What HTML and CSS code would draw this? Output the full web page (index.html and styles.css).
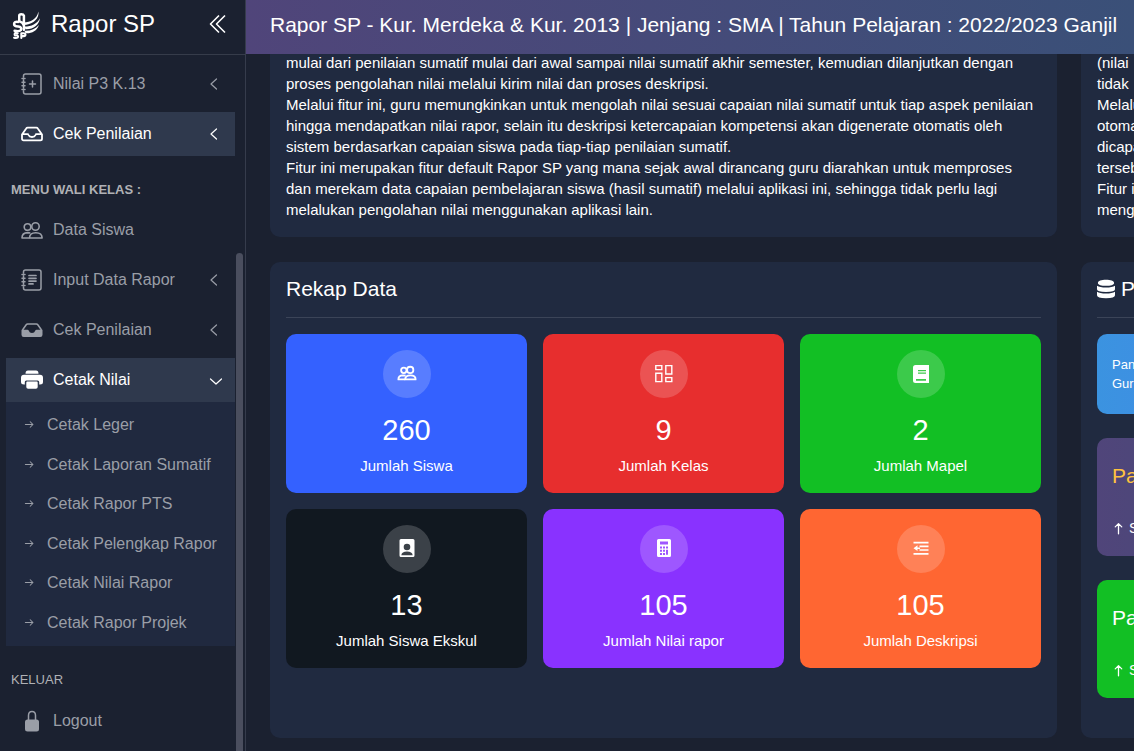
FILE: index.html
```html
<!DOCTYPE html>
<html lang="id">
<head>
<meta charset="utf-8">
<meta name="viewport" content="width=device-width, initial-scale=1">
<title>Rapor SP</title>
<link rel="stylesheet" href="styles.css">
</head>
<body>
<svg class="sprite" aria-hidden="true">
  <symbol id="i-left" viewBox="0 0 16 16"><path d="M10.500 3 5 8l5.500 5" fill="none" stroke="currentColor" stroke-width="1.200" stroke-linecap="round" stroke-linejoin="round"/></symbol>
  <symbol id="i-down" viewBox="0 0 16 16"><path d="M4.500 7 10 12l5.500-5" fill="none" stroke="currentColor" stroke-width="1.200" stroke-linecap="round" stroke-linejoin="round"/></symbol>
  <symbol id="i-arrow" viewBox="0 0 16 16"><path d="M2 8h11M9 4l4 4-4 4" fill="none" stroke="currentColor" stroke-width="1.500" stroke-linecap="round" stroke-linejoin="round"/></symbol>
  <symbol id="i-up" viewBox="0 0 16 16"><path d="M8 14.500V2M4 6l4-4 4 4" fill="none" stroke="currentColor" stroke-width="1.600" stroke-linecap="round" stroke-linejoin="round"/></symbol>
  <symbol id="i-people" viewBox="0 0 22 22"><g fill="none" stroke="currentColor" stroke-width="1.600" stroke-linejoin="round"><circle cx="6.500" cy="8" r="3.300"/><circle cx="14.500" cy="7.500" r="3.700"/><path d="M8.500 19c0-3.600 2.500-5.200 6.300-5.200s6.300 1.600 6.300 5.200z"/><path d="M8.500 19H1c0-3.600 2-5.400 5.800-5.400l2.500.4"/></g></symbol>
  <symbol id="i-people-bold" viewBox="0 0 22 22"><g fill="none" stroke="currentColor" stroke-width="2" stroke-linejoin="round"><circle cx="7.500" cy="7" r="3"/><circle cx="14.500" cy="6.500" r="3.500"/><path d="M9 17c0-3.300 2.500-4.500 5.800-4.500S20.500 13.700 20.500 17z"/><path d="M9 17H1.500c0-3.300 1.500-4.500 5-4.500l3 .3"/></g></symbol>
  <symbol id="i-book-plus" viewBox="0 0 22 22"><g fill="none" stroke="currentColor" stroke-width="1.500" stroke-linecap="round"><path d="M2.500 4V3q0-2 2-2H18q2 0 2 2v16q0 2-2 2H4.500q-2 0-2-2v-1M2.500 7v1M2.500 10.500v1M2.500 14v1M1 5.500h3M1 9.200h3M1 12.800h3M1 16.500h3M11.500 8v6M8.500 11h6"/></g></symbol>
  <symbol id="i-book-text" viewBox="0 0 22 22"><g fill="none" stroke="currentColor" stroke-width="1.500" stroke-linecap="round"><path d="M2.500 4V3q0-2 2-2H18q2 0 2 2v16q0 2-2 2H4.500q-2 0-2-2v-1M2.500 7v1M2.500 10.500v1M2.500 14v1M1 5.500h3M1 9.200h3M1 12.800h3M1 16.500h3"/><path d="M8 6.500h7M8 9.300h7M8 12.100h7M8 14.900h4" stroke-width="1.700"/></g></symbol>
  <symbol id="i-inbox" viewBox="0 0 22 22"><path d="M1 11.500 5.200 5.500q.5-.8 1.400-.8h8.800q.9 0 1.400.8L21 11.500v4.200q0 1.600-1.600 1.600H2.600Q1 17.300 1 15.700zM1 11.200h5.500q.8 0 1 .8.800 2 3.500 2t3.500-2q.2-.8 1-.8H21" fill="none" stroke="currentColor" stroke-width="1.800" stroke-linejoin="round"/></symbol>
  <symbol id="i-inbox-fill" viewBox="0 0 22 22"><path d="M1.500 11 5.200 5.700q.5-.7 1.400-.7h8.800q.9 0 1.400.7L20.500 11" fill="none" stroke="currentColor" stroke-width="1.500"/><path d="M.5 10.800h6q1 0 1.300 1Q8.500 14 11 14t3.200-2.200q.3-1 1.300-1h6v5q0 2.200-2.200 2.200H2.700Q.5 18 .5 15.800z" fill="currentColor"/></symbol>
  <symbol id="i-printer" viewBox="0 0 22 22"><path d="M7 1.500h8q2.500 0 2.500 3.200h-13Q4.500 1.500 7 1.500zM3 5.700h16q3 0 3 3V13q0 2.500-3 2.500h-.8V13q0-1.500-1.500-1.500H5.300q-1.500 0-1.500 1.500v2.500H3Q0 15.500 0 13V8.700q0-3 3-3zM6.300 12.600h9.400q1 0 1 1v4.400q0 1.800-1.800 1.800H7.100q-1.800 0-1.800-1.800v-4.400q0-1 1-1z" fill="currentColor"/></symbol>
  <symbol id="i-lock" viewBox="0 0 22 22"><path d="M7.500 10V5.500q0-4 3.500-4t3.500 4V10" fill="none" stroke="currentColor" stroke-width="1.500"/><rect x="4" y="9.500" width="14" height="12" rx="2.500" fill="currentColor"/></symbol>
  <symbol id="i-grid" viewBox="0 0 20 20"><path d="M1.800 1.600h6v4h-6zM11.800 1.600h6v8.400h-6zM1.800 9.200h6v8.400h-6zM11.800 13.600h6v4h-6z" fill="none" stroke="currentColor" stroke-width="1.400"/></symbol>
  <symbol id="i-book" viewBox="0 0 20 20"><path fill-rule="evenodd" d="M4.500 1H18v18H4.500Q2 19 2 16.500v-13Q2 1 4.500 1zM7 6v1.200h8V6zM7 8.500v1.200h8V8.500zM5 15v1.700h10V15z" fill="currentColor"/></symbol>
  <symbol id="i-badge" viewBox="0 0 20 20"><path fill-rule="evenodd" d="M4 0h12q1.500 0 1.500 1.500v15Q17.500 18 16 18H4q-1.500 0-1.500-1.500v-15Q2.500 0 4 0zM10 4.700a3.300 3.300 0 1 0 0 6.600 3.300 3.300 0 1 0 0-6.600zM4.300 16.200h11.400q-.5-3.600-5.700-3.600t-5.700 3.600z" fill="currentColor"/></symbol>
  <symbol id="i-calc" viewBox="0 0 20 20"><path fill-rule="evenodd" d="M4.500 0h11Q17 0 17 1.500v15q0 1.500-1.500 1.500h-11Q3 18 3 16.500v-15Q3 0 4.500 0zM6 2.500v3h8v-3zM6 7.500v2h2v-2zM9 7.500v2h2v-2zM12 7.500v2h2v-2zM6 10.800v2h2v-2zM9 10.800v2h2v-2zM12 10.800v5h2v-5zM6 14v2h2v-2zM9 14v2h2v-2z" fill="currentColor"/></symbol>
  <symbol id="i-indent" viewBox="0 0 20 20"><path d="M2.500 3.600h15M8.500 7.300h9M8.500 11h9M2.500 14.800h15" stroke="currentColor" stroke-width="1.700"/><path d="M2.500 9.200 6.500 6.300V12zM6 8.500h3V10H6z" fill="currentColor"/></symbol>
  <symbol id="i-db" viewBox="0 0 20 22"><path d="M1 4.200C1 2.200 5 .8 10 .8s9 1.400 9 3.400-4 3.300-9 3.300-9-1.300-9-3.300zM0 7.300q3 2 10 2t10-2v3.900q0 3-10 3t-10-3zM0 14q3 2 10 2t10-2v4q0 3.300-10 3.300T0 18z" fill="currentColor"/></symbol>
</svg>

<div class="app">
  <aside class="sidebar">
    <header class="brand">
      <svg class="brand-logo" viewBox="0 0 28 28" aria-hidden="true">
        <g fill="#fff">
          <path d="M11 12c7 0 13-3 14.500-10.500C26.500 8 21 13.500 13 14.500z"/>
          <path d="M12 16c7 0 12-2.500 15-8-1 7-7 11-14 10.500z"/>
          <path d="M12 20c6 .3 10.500-1.500 14-5.500-2 6-7.500 8.500-13 8z"/>
        </g>
        <g fill="none" stroke="#fff" stroke-linecap="round" stroke-linejoin="round">
          <path d="M7 11V5.500q0-1.500 2-1.500t2.500 1.500V19M6 11.500q-4-.5-4 2T6 16q4 .5 2.500 3.500Q7 21 2.500 20M7.500 11q3 1 4 4" stroke-width="2.400"/>
          <path d="M5.500 22.500q-3-.8-3 .8t2 1.200q2 .5 1 2-1 .8-3.500.3M9 27v-4.500h2q2 0 2 1.500t-2 1.200H9" stroke-width="2"/>
        </g>
      </svg>
      <span class="brand-name">Rapor SP</span>
      <button class="collapse" type="button" aria-label="Tutup menu">
        <svg viewBox="0 0 20 20" aria-hidden="true"><path d="M11 1.500 2.500 10l8.500 8.500M17 1.500 8.500 10l8.500 8.500" fill="none" stroke="currentColor" stroke-width="1.600" stroke-linejoin="round"/></svg>
      </button>
    </header>
    <nav class="menu">
      <a class="item" href="#"><svg class="icon"><use href="#i-book-plus"/></svg><span>Nilai P3 K.13</span><svg class="chev"><use href="#i-left"/></svg></a>
      <a class="item active" href="#"><svg class="icon"><use href="#i-inbox"/></svg><span>Cek Penilaian</span><svg class="chev"><use href="#i-left"/></svg></a>
      <h2 class="group strong">MENU WALI KELAS :</h2>
      <a class="item" href="#"><svg class="icon"><use href="#i-people"/></svg><span>Data Siswa</span></a>
      <a class="item" href="#"><svg class="icon"><use href="#i-book-text"/></svg><span>Input Data Rapor</span><svg class="chev"><use href="#i-left"/></svg></a>
      <a class="item" href="#"><svg class="icon"><use href="#i-inbox-fill"/></svg><span>Cek Penilaian</span><svg class="chev"><use href="#i-left"/></svg></a>
      <div class="open">
        <a class="item active" href="#"><svg class="icon"><use href="#i-printer"/></svg><span>Cetak Nilai</span><svg class="chev"><use href="#i-down"/></svg></a>
        <ul class="submenu">
          <li><a href="#"><svg><use href="#i-arrow"/></svg>Cetak Leger</a></li>
          <li><a href="#"><svg><use href="#i-arrow"/></svg>Cetak Laporan Sumatif</a></li>
          <li><a href="#"><svg><use href="#i-arrow"/></svg>Cetak Rapor PTS</a></li>
          <li><a href="#"><svg><use href="#i-arrow"/></svg>Cetak Pelengkap Rapor</a></li>
          <li><a href="#"><svg><use href="#i-arrow"/></svg>Cetak Nilai Rapor</a></li>
          <li><a href="#"><svg><use href="#i-arrow"/></svg>Cetak Rapor Projek</a></li>
        </ul>
      </div>
      <h2 class="group">KELUAR</h2>
      <a class="item" href="#"><svg class="icon"><use href="#i-lock"/></svg><span>Logout</span></a>
    </nav>
    <div class="scroll-thumb"></div>
  </aside>

  <div class="page">
    <header class="topbar"><h1>Rapor SP - Kur. Merdeka &amp; Kur. 2013 | Jenjang : SMA | Tahun Pelajaran : 2022/2023 Ganjil</h1></header>
    <main class="content">
      <section class="panel intro">
        <p>mulai dari penilaian sumatif mulai dari awal sampai nilai sumatif akhir semester, kemudian dilanjutkan dengan<br>proses pengolahan nilai melalui kirim nilai dan proses deskripsi.</p>
        <p>Melalui fitur ini, guru memungkinkan untuk mengolah nilai sesuai capaian nilai sumatif untuk tiap aspek penilaian<br>hingga mendapatkan nilai rapor, selain itu deskripsi ketercapaian kompetensi akan digenerate otomatis oleh<br>sistem berdasarkan capaian siswa pada tiap-tiap penilaian sumatif.</p>
        <p>Fitur ini merupakan fitur default Rapor SP yang mana sejak awal dirancang guru diarahkan untuk memproses<br>dan merekam data capaian pembelajaran siswa (hasil sumatif) melalui aplikasi ini, sehingga tidak perlu lagi<br>melalukan pengolahan nilai menggunakan aplikasi lain.</p>
      </section>
      <section class="panel intro">
        <p>(nilai<br>tidak</p>
        <p>Melalui<br>otomatis<br>dicapai<br>tersebut</p>
        <p>Fitur ini<br>mengolah</p>
      </section>
      <section class="panel">
        <h2 class="panel-title">Rekap Data</h2>
        <div class="stats">
          <article class="stat blue"><div class="bubble"><svg><use href="#i-people-bold"/></svg></div><strong>260</strong><span>Jumlah Siswa</span></article>
          <article class="stat red"><div class="bubble"><svg><use href="#i-grid"/></svg></div><strong>9</strong><span>Jumlah Kelas</span></article>
          <article class="stat green"><div class="bubble"><svg><use href="#i-book"/></svg></div><strong>2</strong><span>Jumlah Mapel</span></article>
          <article class="stat black"><div class="bubble"><svg><use href="#i-badge"/></svg></div><strong>13</strong><span>Jumlah Siswa Ekskul</span></article>
          <article class="stat purple"><div class="bubble"><svg><use href="#i-calc"/></svg></div><strong>105</strong><span>Jumlah Nilai rapor</span></article>
          <article class="stat orange"><div class="bubble"><svg><use href="#i-indent"/></svg></div><strong>105</strong><span>Jumlah Deskripsi</span></article>
        </div>
      </section>
      <section class="panel">
        <h2 class="panel-title"><svg><use href="#i-db"/></svg>Panduan</h2>
        <div class="guides">
          <article class="guide sky"><p>Panduan<br>Guru</p></article>
          <article class="guide violet"><h3>Panduan</h3><a href="#"><svg><use href="#i-up"/></svg>Selengkapnya</a></article>
          <article class="guide lime"><h3>Panduan</h3><a href="#"><svg><use href="#i-up"/></svg>Selengkapnya</a></article>
        </div>
      </section>
    </main>
  </div>
</div>
</body>
</html>
```

FILE: styles.css
```css
* { box-sizing: border-box; }
body {
  margin: 0;
  background: #1b2130;
  color: #fff;
  font: 15px/21px "Liberation Sans", Arial, sans-serif;
}
h1, h2, h3, p, ul { margin: 0; padding: 0; font-weight: 400; }
a { color: inherit; text-decoration: none; }
.sprite { display: none; }
.app { display: flex; height: 100vh; overflow: hidden; }

/* Sidebar */
.sidebar {
  position: relative;
  flex: 0 0 246px;
  overflow: hidden;
  border-right: 1px solid #363c4c;
  background: #1b2130;
}
.brand {
  display: flex;
  align-items: center;
  height: 55px;
  padding: 0 17px 6px 12px;
  border-bottom: 1px solid #363c4a;
}
.brand-logo { width: 29px; height: 29px; }
.brand-name { margin-left: 10px; font-size: 24px; line-height: 30px; }
.collapse {
  display: flex;
  margin-left: auto;
  padding: 0;
  border: 0;
  background: none;
  color: #fff;
}
.collapse svg { width: 20px; height: 20px; }
.menu { display: flex; flex-direction: column; gap: 6px; padding: 7px 10px 0 6px; }
.item {
  display: flex;
  align-items: center;
  height: 44px;
  padding: 0 13px 0 15px;
  color: #9a9ea7;
  font-size: 16px;
  line-height: 20px;
}
.item.active { background: #2f394d; color: #fff; }
.icon { width: 22px; height: 22px; margin-right: 10px; }
.chev { width: 16px; height: 16px; margin-left: auto; }
.group {
  padding: 19px 5px 5px;
  color: #b0b1b5;
  font-size: 13px;
  line-height: 17px;
}
.strong { padding-bottom: 4px; font-weight: 700; }
.submenu {
  display: flex;
  flex-direction: column;
  min-height: 244px;
  padding: 3px 0 4px;
  background: #20293f;
  list-style: none;
}
.submenu li { display: flex; flex: 1; }
.submenu a {
  display: flex;
  flex: 1;
  align-items: center;
  padding-left: 18px;
  color: #9a9ea7;
  font-size: 16px;
}
.submenu svg { width: 11px; height: 11px; margin-right: 12px; }
.scroll-thumb {
  position: absolute;
  top: 253px;
  right: 2px;
  bottom: -8px;
  width: 7px;
  border-radius: 4px;
  background: #4a4e5e;
}

/* Main area */
.page { display: flex; flex: 1; flex-direction: column; min-width: 0; }
.topbar {
  display: flex;
  flex: none;
  align-items: center;
  height: 54px;
  padding: 0 0 4px 24px;
  background: linear-gradient(90deg, #50457a, #3a5078);
}
.topbar h1 { font-size: 21px; line-height: 26px; white-space: nowrap; }
.content {
  display: grid;
  flex: 1;
  grid-template-columns: calc(100% - 77px) 380px;
  grid-template-rows: auto 1fr;
  gap: 25px 24px;
  min-height: 0;
  padding: 0 0 13px 24px;
  overflow: hidden;
}
.panel { min-width: 0; padding: 15px 16px; border-radius: 10px; background: #202a40; }
.intro {
  margin-top: -2px;
  padding-top: 0;
  padding-bottom: 17px;
  border-radius: 0 0 10px 10px;
  white-space: nowrap;
}
.panel-title {
  display: flex;
  align-items: center;
  padding-bottom: 17px;
  border-bottom: 1px solid #3b4458;
  font-size: 21px;
  line-height: 23px;
}
.panel-title svg { width: 18px; height: 22px; margin-right: 6px; }
.stats { display: grid; grid-template-columns: repeat(3, 1fr); gap: 16px; margin-top: 16px; }
.stat {
  display: flex;
  flex-direction: column;
  align-items: center;
  padding: 16px 16px 17px;
  border-radius: 10px;
}
.bubble {
  display: grid;
  place-items: center;
  width: 48px;
  height: 48px;
  border-radius: 50%;
  background: rgba(255, 255, 255, .18);
}
.bubble svg { width: 20px; height: 20px; }
.stat strong { margin-top: 16px; font-size: 29px; font-weight: 400; line-height: 32px; }
.stat span { margin-top: 9px; }
.blue { background: #3461ff; }
.red { background: #e72e2e; }
.green { background: #12bf24; }
.black { background: #111820; }
.purple { background: #8932ff; }
.orange { background: #ff6632; }

.guides { display: grid; gap: 24px; margin-top: 16px; }
.guide { border-radius: 10px; padding: 16px 15px; }
.guide h3 { padding: 9px 0; font-size: 21px; line-height: 26px; }
.guide a { display: flex; align-items: center; margin-top: 10px; padding: 8px 0 0; font-size: 14px; line-height: 24px; }
.guide a svg { width: 13px; height: 13px; margin-right: 4px; }
.sky { padding: 21px 15px; background: linear-gradient(90deg, #3b93e0, #4a7df0); font-size: 13px; line-height: 19px; }
.violet { background: linear-gradient(90deg, #50457a, #3a5078); }
.violet h3 { color: #ffc23e; }
.lime { background: #12bf24; }
```
